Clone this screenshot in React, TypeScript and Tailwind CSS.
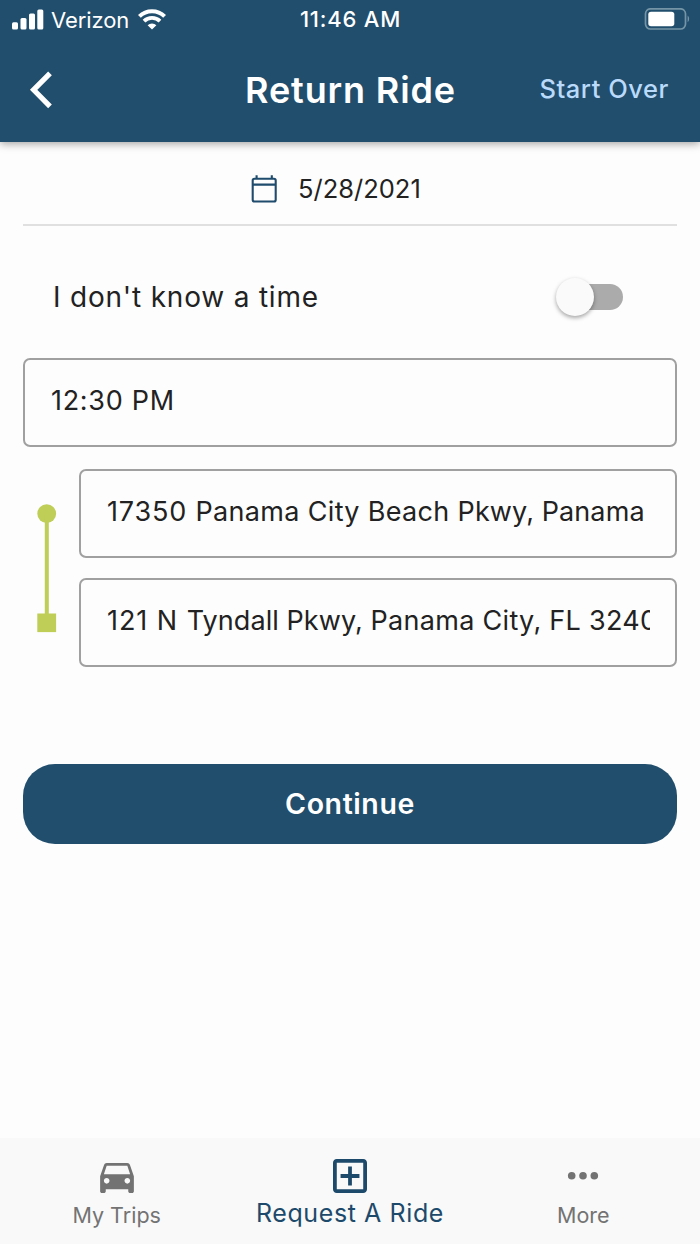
import type { ReactNode } from "react";

function StatusBar() {
  return (
    <div className="grid h-[39px] grid-cols-[1fr_auto_1fr] items-center text-white">
      <div className="flex items-center pl-3">
        <svg width="32" height="21" viewBox="0 0 32 21" fill="currentColor">
          <rect x="0" y="13.2" width="6" height="7.2" rx="1.5" />
          <rect x="8.5" y="9" width="6" height="11.4" rx="1.5" />
          <rect x="17" y="4.5" width="6" height="15.9" rx="1.5" />
          <rect x="25.3" y="0.4" width="6" height="20" rx="1.5" />
        </svg>
        <span className="ml-[7px] text-[22px] leading-[38px] tracking-[-0.1px]">Verizon</span>
        <svg className="ml-[9px] -mt-px" width="28" height="21" viewBox="0 0 28 21" fill="none" stroke="currentColor">
          <path d="M1.4 7.4a18 18 0 0 1 25.2 0" strokeWidth="4" />
          <path d="M6 12.2a11.5 11.5 0 0 1 16 0" strokeWidth="3.8" />
          <path d="M14 20.6 9.6 16.2a6.4 6.4 0 0 1 8.8 0Z" fill="currentColor" stroke="none" />
        </svg>
      </div>
      <span className="pl-px text-[22px] leading-[37px] font-medium tracking-[0.8px]">11:46 AM</span>
      <div className="flex justify-end pr-[10px] pb-[2px]">
        <svg width="46" height="22" viewBox="0 0 46 22">
          <rect x="1.5" y="0.8" width="40" height="20.2" rx="5" fill="none" stroke="#7595a6" strokeWidth="1.7" />
          <rect x="4.3" y="3.7" width="26" height="14.6" rx="2.8" fill="white" />
          <path d="M43.6 7.6c2 1.5 2 5.1 0 6.6Z" fill="#7595a6" />
        </svg>
      </div>
    </div>
  );
}

function Header() {
  return (
    <header className="h-[142px] shrink-0 bg-[#214e6c] shadow-[0_2px_8px_rgba(0,0,0,0.35)]">
      <StatusBar />
      <div className="grid h-[102px] grid-cols-[1fr_auto_1fr] items-center">
        <button className="justify-self-start pl-7" aria-label="Back">
          <svg width="26" height="40" viewBox="0 0 26 40" fill="none" stroke="white" strokeWidth="5.2">
            <path d="M22 3.3 5.6 19.8 22 36.3" />
          </svg>
        </button>
        <h1 className="pl-px text-[36px] leading-[44px] font-semibold tracking-[0.85px] text-white">Return Ride</h1>
        <button className="justify-self-end pr-[31px] pb-0.5 text-[25.5px] leading-8 font-medium tracking-[0.55px] text-[#badafb]">
          Start Over
        </button>
      </div>
    </header>
  );
}

function Field({ children }: { children: ReactNode }) {
  return (
    <div className="h-[89px] rounded-[7px] border-2 border-[#a0a0a0] pt-[24px] pr-[25px] pl-[26px]">
      <div className="overflow-hidden text-[27px] leading-[34px] whitespace-nowrap">{children}</div>
    </div>
  );
}

function Tab({ label, active, children }: { label: string; active?: boolean; children: ReactNode }) {
  return (
    <button className={active ? "flex flex-col items-center pt-[21px] text-[#1d4a6b]" : "flex flex-col items-center pt-[21px] text-[#737373]"}>
      <span className="flex h-[34px] items-end">{children}</span>
      <span
        className={
          active
            ? "mt-1 text-[25px] leading-8 tracking-[0.6px]"
            : "mt-1.5 text-[21.5px] leading-8"
        }
      >
        {label}
      </span>
    </button>
  );
}

export default function App() {
  return (
    <div className="flex h-[1244px] w-[700px] flex-col overflow-hidden bg-[#fdfdfd] font-['Inter','Liberation_Sans',sans-serif] text-[#222]">
      <Header />
      <main className="flex flex-1 flex-col px-[23px]">
        <div className="flex h-[84px] items-center border-b-2 border-[#e0e0e0] pt-[11px] pl-[228px]">
          <svg width="26" height="28" viewBox="0 0 26 28" fill="none" stroke="#1f4b6c" strokeWidth="2.1">
            <rect x="1.7" y="3.8" width="23" height="22.7" rx="1.8" />
            <path d="M1.7 9.6h23M5.6 0.3v3.6M20.8 0.3v3.6" />
          </svg>
          <span className="ml-[21px] text-[25.5px] leading-8">5/28/2021</span>
        </div>

        <div className="flex h-[132px] items-center justify-between pt-[9px] pr-[54px] pl-[30px]">
          <span className="text-[28px] leading-9 tracking-[0.8px]">I don't know a time</span>
          <button role="switch" aria-checked="false" aria-label="I don't know a time" className="flex h-[26px] w-[65px] items-center rounded-full bg-[#ababab]">
            <span className="-ml-[2px] size-[38px] shrink-0 rounded-full bg-[#fafafa] shadow-[0_2px_4px_rgba(0,0,0,0.35)]" />
          </button>
        </div>

        <Field>
          <span className="tracking-[0.7px]">12:30 PM</span>
        </Field>

        <div className="mt-[22px] flex">
          <svg className="mt-[34px] ml-[14px] shrink-0" width="20" height="130" viewBox="0 0 20 130" fill="#bfce56">
            <circle cx="9.7" cy="10.7" r="9.4" />
            <rect x="7.8" y="12" width="4" height="100" />
            <rect x="0.3" y="110.5" width="18.8" height="18.6" />
          </svg>
          <div className="ml-[22px] flex min-w-0 flex-1 flex-col gap-5">
            <Field>
              <span className="tracking-[0.83px]">17350 </span>
              <span className="tracking-[0.33px]">Panama City Beach </span>
              <span className="tracking-[0.1px]">Pkwy, Panama</span>
            </Field>
            <Field>
              <span className="tracking-[0.95px]">121 N </span>
              <span className="tracking-[0.08px]">Tyndall Pkwy, </span>
              <span className="tracking-[0.3px]">Panama City, FL 32404</span>
            </Field>
          </div>
        </div>

        <button className="mt-[97px] h-20 rounded-[32px] bg-[#214e6c] pb-px text-[28.5px] leading-9 font-semibold tracking-[0.6px] text-white">
          Continue
        </button>
      </main>

      <nav className="grid h-[106px] shrink-0 grid-cols-3 items-start bg-[#f9f9f9]">
        <Tab label="My Trips">
          <svg width="34" height="30" viewBox="3 5 18 16" fill="currentColor">
            <path d="M18.92 6.01C18.72 5.42 18.16 5 17.5 5h-11c-.66 0-1.21.42-1.42 1.01L3 12v8c0 .55.45 1 1 1h1c.55 0 1-.45 1-1v-1h12v1c0 .55.45 1 1 1h1c.55 0 1-.45 1-1v-8l-2.08-5.99zM6.5 16c-.83 0-1.5-.67-1.5-1.5S5.67 13 6.5 13s1.5.67 1.5 1.5S7.33 16 6.5 16zm11 0c-.83 0-1.5-.67-1.5-1.5s.67-1.5 1.5-1.5 1.5.67 1.5 1.5-.67 1.5-1.5 1.5zM5 11l1.5-4.5h11L19 11H5z" />
          </svg>
        </Tab>
        <Tab label="Request A Ride" active>
          <svg width="34" height="34" viewBox="3 3 18 18" fill="currentColor">
            <path d="M19 3H5c-1.11 0-2 .9-2 2v14c0 1.1.89 2 2 2h14c1.1 0 2-.9 2-2V5c0-1.1-.9-2-2-2zm0 16H5V5h14v14zm-8-2h2v-4h4v-2h-4V7h-2v4H7v2h4z" />
          </svg>
        </Tab>
        <Tab label="More">
          <svg width="32" height="34" viewBox="0 0 32 34" fill="currentColor">
            <circle cx="4.7" cy="16.7" r="3.8" />
            <circle cx="16" cy="16.7" r="3.8" />
            <circle cx="27.3" cy="16.7" r="3.8" />
          </svg>
        </Tab>
      </nav>
    </div>
  );
}
